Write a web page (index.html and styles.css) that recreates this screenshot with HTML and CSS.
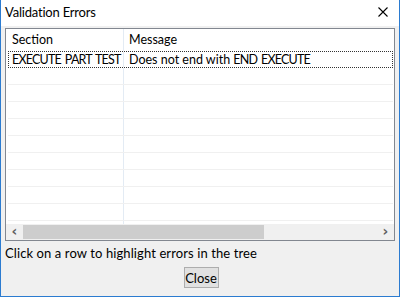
FILE: index.html
```html
<!DOCTYPE html>
<html lang="en">
<head>
    <meta charset="UTF-8">
    <title>Validation Errors</title>
    <link rel="stylesheet" href="styles.css">
</head>
<body>

<div id="dialog">
    <div class="titlebar">
        <span class="title">Validation Errors</span>
        <svg class="close-x" width="10" height="10" viewBox="0 0 10 10">
            <path d="M0.5 0.5 L9.5 9.5 M9.5 0.5 L0.5 9.5" stroke="#000" stroke-width="1.1" fill="none"/>
        </svg>
    </div>
    <div class="content">
        <div class="list">
            <div class="rows">
                <div class="row header">
                    <div class="cell c1">Section</div>
                    <div class="cell c2">Message</div>
                </div>
                <div class="row focused">
                    <div class="cell c1 caps">EXECUTE PART TEST</div>
                    <div class="cell c2">Does not end with <span class="caps">END EXECUTE</span></div>
                </div>
                <div class="row"><div class="cell c1"></div><div class="cell c2"></div></div>
                <div class="row"><div class="cell c1"></div><div class="cell c2"></div></div>
                <div class="row"><div class="cell c1"></div><div class="cell c2"></div></div>
                <div class="row"><div class="cell c1"></div><div class="cell c2"></div></div>
                <div class="row"><div class="cell c1"></div><div class="cell c2"></div></div>
                <div class="row"><div class="cell c1"></div><div class="cell c2"></div></div>
                <div class="row"><div class="cell c1"></div><div class="cell c2"></div></div>
                <div class="row"><div class="cell c1"></div><div class="cell c2"></div></div>
                <div class="row"><div class="cell c1"></div><div class="cell c2"></div></div>
                <div class="row"><div class="cell c1"></div><div class="cell c2"></div></div>
            </div>
            <div class="hscroll">
                <div class="arrow">&#8249;</div>
                <div class="track"><div class="thumb"></div></div>
                <div class="arrow">&#8250;</div>
            </div>
        </div>
        <p class="hint">Click on a row to highlight errors in the tree</p>
        <div class="buttons">
            <button>Close</button>
        </div>
    </div>
</div>

</body>
</html>
```

FILE: styles.css
```css
body {
    margin: 0;
    font-family: "Lato", "Open Sans", sans-serif;
    font-size: 13px;
    color: #000;
}
#dialog {
    width: 400px;
    height: 297px;
    box-sizing: border-box;
    border: 1px solid #2b7bd0;
    border-top: none;
    background-color: #f0f0f0;
    display: flex;
    flex-direction: column;
}
.titlebar {
    height: 26px;
    background-color: #fff;
    display: flex;
    align-items: center;
    justify-content: space-between;
    padding: 0 11px 2px 4px;
    box-sizing: border-box;
}
.title {
    letter-spacing: -0.2px;
}
.content {
    padding: 2px 4px 0 4px;
    display: flex;
    flex-direction: column;
}
.list {
    height: 213px;
    box-sizing: border-box;
    border: 1px solid #828790;
    background-color: #fff;
    display: flex;
    flex-direction: column;
    font-size: 12.5px;
}
.rows {
    flex: 1;
    overflow: hidden;
}
.row {
    display: flex;
    height: 17px;
    box-sizing: border-box;
    border-bottom: 1px solid #f0f0f0;
    margin: 0 1px 0 2px;
}
.row.header {
    height: 22px;
    border-bottom: none;
    margin: 0;
}
.row.header .c1 {
    width: 118px;
    padding-left: 6px;
}
.row.focused {
    border: 1px dotted #333;
}
.cell {
    line-height: 15px;
    white-space: nowrap;
    box-sizing: border-box;
}
.caps {
    letter-spacing: -0.8px;
    word-spacing: 1.5px;
}
.row.header .cell {
    line-height: 22px;
}
.c1 {
    width: 116px;
    padding-left: 4px;
    border-right: 1px solid #e3ebf4;
}
.c2 {
    flex: 1;
    padding-left: 5px;
}
.row.focused .c1 {
    width: 115px;
    padding-left: 3px;
}
.hscroll {
    height: 16px;
    display: flex;
    background-color: #f0f0f0;
}
.arrow {
    width: 17px;
    text-align: center;
    font-family: "DejaVu Sans", sans-serif;
    font-size: 14px;
    line-height: 14px;
    font-weight: bold;
    color: #606060;
}
.track {
    flex: 1;
    padding: 1px 0;
    box-sizing: border-box;
}
.thumb {
    width: 241px;
    height: 100%;
    background-color: #cdcdcd;
}
.hint {
    margin: 4px 0 0 0;
    line-height: 17px;
    letter-spacing: 0.1px;
}
.buttons {
    display: flex;
    justify-content: center;
    margin-top: 5px;
}
button {
    font-family: inherit;
    font-size: 13px;
    width: 35px;
    height: 21px;
    padding: 0;
    background-color: #e1e1e1;
    border: 1px solid #adadad;
    margin-left: 2px;
}
```
